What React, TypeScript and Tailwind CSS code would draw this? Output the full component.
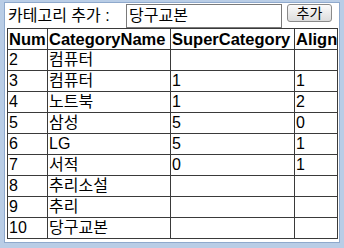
import React from "react";

const rows: [string, string, string, string][] = [
  ["2", "컴퓨터", "", ""],
  ["3", "컴퓨터", "1", "1"],
  ["4", "노트북", "1", "2"],
  ["5", "삼성", "5", "0"],
  ["6", "LG", "5", "1"],
  ["7", "서적", "0", "1"],
  ["8", "추리소설", "", ""],
  ["9", "추리", "", ""],
  ["10", "당구교본", "", ""],
];

const font = { fontFamily: '"Liberation Sans", "Noto Sans CJK KR", sans-serif' };

export default function App() {
  return (
    <div
      className="w-[344px] h-[248px] bg-[#b9cde6] pt-[2px] px-[4px] pb-[5px] text-black"
      style={font}
    >
      <div className="w-full h-full bg-white border border-[#8fa9cc] flex flex-col">
        <div className="flex items-center h-[25px] pl-[3px] pt-[1px]">
          <span className="text-[16px] leading-[18px] whitespace-nowrap w-[118px]">카테고리 추가 :</span>
          <div className="w-[156px] h-[24px] border border-[#7a7a7a] flex items-center pl-[2px] text-[16px] leading-[18px]">
            당구교본
          </div>
          <button className="ml-[5px] w-[45px] h-[18px] self-start rounded-[3px] border border-[#8a8a8a] bg-gradient-to-b from-[#fbfbfb] to-[#dcdcdc] text-[14px] leading-[14px] flex items-center justify-center">
            추가
          </button>
        </div>
        <div className="pl-[2px]">
          <table className="border-collapse table-fixed border border-[#3a3a3a] text-[16px]">
            <colgroup>
              <col className="w-[40px]" />
              <col className="w-[123px]" />
              <col className="w-[124px]" />
              <col className="w-[41px]" />
            </colgroup>
            <thead>
              <tr className="h-[21px]">
                {["Num", "CategoryName", "SuperCategory", "Align"].map((h) => (
                  <th
                    key={h}
                    className="border border-[#3a3a3a] p-0 pl-[1px] text-left font-bold text-[16.5px] leading-[18px] whitespace-nowrap overflow-hidden"
                  >
                    {h}
                  </th>
                ))}
              </tr>
            </thead>
            <tbody>
              {rows.map((r) => (
                <tr key={r[0]} className="h-[21px]">
                  {r.map((c, i) => (
                    <td
                      key={i}
                      className="border border-[#3a3a3a] p-0 pl-[1px] leading-[18px] whitespace-nowrap"
                    >
                      {c}
                    </td>
                  ))}
                </tr>
              ))}
            </tbody>
          </table>
        </div>
      </div>
    </div>
  );
}
